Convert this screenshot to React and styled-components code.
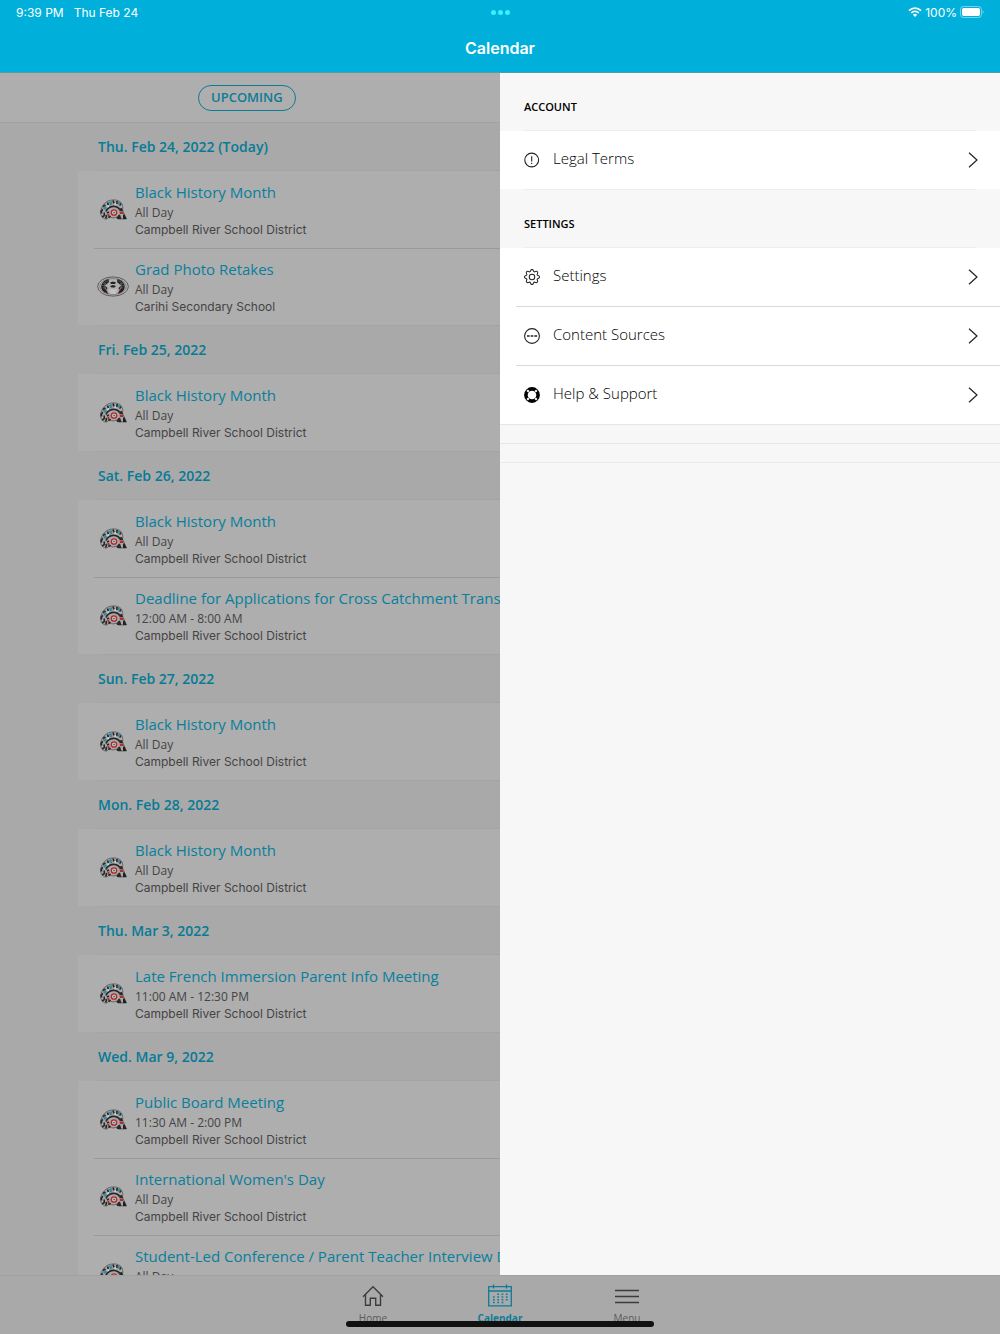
import React from 'react';
import styled, { createGlobalStyle } from 'styled-components';
import { BsGear } from 'react-icons/bs';

const DISTRICT = 'Campbell River School District';

const days = [
  {
    date: 'Thu. Feb 24, 2022 (Today)',
    events: [
      { title: 'Black History Month', time: 'All Day', source: DISTRICT },
      {
        title: 'Grad Photo Retakes',
        time: 'All Day',
        source: 'Carihi Secondary School',
        logo: 'carihi',
      },
    ],
  },
  {
    date: 'Fri. Feb 25, 2022',
    events: [
      { title: 'Black History Month', time: 'All Day', source: DISTRICT },
    ],
  },
  {
    date: 'Sat. Feb 26, 2022',
    events: [
      { title: 'Black History Month', time: 'All Day', source: DISTRICT },
      {
        title: 'Deadline for Applications for Cross Catchment Transfers',
        time: '12:00 AM - 8:00 AM',
        source: DISTRICT,
      },
    ],
  },
  {
    date: 'Sun. Feb 27, 2022',
    events: [
      { title: 'Black History Month', time: 'All Day', source: DISTRICT },
    ],
  },
  {
    date: 'Mon. Feb 28, 2022',
    events: [
      { title: 'Black History Month', time: 'All Day', source: DISTRICT },
    ],
  },
  {
    date: 'Thu. Mar 3, 2022',
    events: [
      {
        title: 'Late French Immersion Parent Info Meeting',
        time: '11:00 AM - 12:30 PM',
        source: DISTRICT,
      },
    ],
  },
  {
    date: 'Wed. Mar 9, 2022',
    events: [
      {
        title: 'Public Board Meeting',
        time: '11:30 AM - 2:00 PM',
        source: DISTRICT,
      },
      { title: "International Women's Day", time: 'All Day', source: DISTRICT },
      {
        title: 'Student-Led Conference / Parent Teacher Interview Day',
        time: 'All Day',
        source: DISTRICT,
      },
    ],
  },
];

const DistrictLogo = () => (
  <svg width="32" height="22" viewBox="0 0 32 22" aria-hidden="true">
    <path
      d="M3.500 13C4 9 6 5 10 2.500C15 0 21 0.500 24 3.500C26 6 26 9 25.500 11L29.500 20H21L19.500 18C16 20 13 18 12 18L10 20C6 20.500 3.500 17 3.500 13Z"
      fill="#a8a8a8"
      stroke="#4a4a4a"
      strokeWidth="0.7"
    />
    <g fill="none" stroke="#262626" strokeWidth="1.700">
      <path d="M4.500 14.500C4 12.500 4.500 11 6 10.500M5 17.500C7 18 8 16 7 13.500M8.500 19.500C9.500 18.500 9.500 17 9 16" />
      <path d="M6 7.500L8.500 6M10.500 3.500L11.500 6.500M16 1.500L17 4.500M20 2L20 5M24 4.500L22.500 6.500" />
      <path d="M9 12.500C10 9 14 7 18 7.500C20.500 8 22 9 22.500 10.500" />
      <path d="M11.500 18.500L13.500 17M10 14L12 13" />
    </g>
    <path d="M22 9.500L25 9L26 12H22.500Z" fill="#282828" />
    <path d="M21.500 16L23 15.500L24.500 20H20L19.500 18.500Z" fill="#292929" />
    <path d="M26 15.500H27.500L29.500 20H26Z" fill="#1f1f1f" />
    <path d="M11.500 3L14.500 2L15.500 5.500L13.500 6.500Z" fill="#3d8a9e" />
    <path d="M21 2.500L23.500 3L22.500 6L20.500 5.500Z" fill="#3d8a9e" />
    <path d="M5.500 9L8.500 7L10 9L8 11Z" fill="#3d8a9e" />
    <path d="M17.500 4L19 4L19 6L17.500 6Z" fill="#d0d0d0" />
    <path d="M10 6.500L12 6L12 8L10.500 8.500Z" fill="#d0d0d0" />
    <circle
      cx="17"
      cy="13.500"
      r="2.700"
      fill="#c2c2c2"
      stroke="#b42629"
      strokeWidth="1.300"
    />
    <circle cx="17" cy="13.500" r="0.700" fill="#333" />
    <path
      d="M22.500 12.500H26L26.500 15H23ZM10.500 15L12.500 14.500L12 17L10.500 17Z"
      fill="#b42b2e"
    />
  </svg>
);

const CarihiLogo = () => (
  <svg width="32" height="22" viewBox="0 0 32 22" aria-hidden="true">
    <ellipse
      cx="16"
      cy="10.500"
      rx="15.400"
      ry="9.600"
      fill="#b4b4b4"
      stroke="#505050"
      strokeWidth="0.9"
    />
    <ellipse
      cx="16"
      cy="10.500"
      rx="13.300"
      ry="8"
      fill="#b0b0b0"
      stroke="#5a5a5a"
      strokeWidth="0.6"
    />
    <path
      d="M11.500 3C4 5 2 12 7 16L11.500 18L9.500 14.500L10.500 12L8 9.500L12 6ZM20.500 3C28 5 30 12 25 16L20.500 18L22.500 14.500L21.500 12L24 9.500L20 6Z"
      fill="#222"
    />
    <path
      d="M13 6.500L16 5.500L19 6.500L18 8H14ZM13 10L16 9L19 10L17.500 11.500H14.500Z"
      fill="#252525"
    />
    <path d="M12 13.500H20L18.500 18H13.500Z" fill="#c2c2c2" />
    <path
      d="M6 7.500L8 6.500M6 11.500L8.500 12.500M10 15L9 13M26 7.500L24 6.500M26 11.500L23.500 12.500M22 15L23 13"
      stroke="#a03636"
      strokeWidth="1"
    />
    <path
      d="M8 5.500L11 5M24 5.500L21 5M5 9.500L7 9.500M27 9.500L25 9.500"
      stroke="#36593b"
      strokeWidth="1"
    />
    <path
      d="M8.500 7C7 9.500 8 12.500 10 14.500M23.500 7C25 9.500 24 12.500 22 14.500"
      fill="none"
      stroke="#b0b0b0"
      strokeWidth="0.6"
    />
  </svg>
);

const LegalIcon = () => (
  <svg width="16" height="16" viewBox="0 0 16 16" fill="none" stroke="#222">
    <circle cx="7.700" cy="8" r="6.900" strokeWidth="1.100" />
    <path d="M7.700 4.300V9.500M7.700 10.700V12" strokeWidth="1.100" />
  </svg>
);

const SourcesIcon = () => (
  <svg width="16" height="16" viewBox="0 0 16 16" fill="none" stroke="#222">
    <circle cx="8" cy="8" r="7.400" strokeWidth="1.100" />
    <path
      d="M3 8H5.700M6.700 8H9.400M10.400 8H13.100"
      strokeWidth="1.300"
    />
  </svg>
);

const SupportIcon = () => (
  <svg width="16" height="16" viewBox="0 0 16 16" fill="none">
    <circle cx="8" cy="8" r="6.100" stroke="#000" strokeWidth="3.600" />
    <path
      d="M3.200 3.200L4.800 4.800M12.800 3.200L11.200 4.800M3.200 12.800L4.800 11.200M12.800 12.800L11.200 11.200"
      stroke="#fff"
      strokeWidth="2"
    />
  </svg>
);

const Chevron = () => (
  <svg width="10" height="16" viewBox="0 0 10 16" fill="none">
    <path d="M1 0.700L9 8L1 15.300" stroke="#222" strokeWidth="1.200" />
  </svg>
);

const WifiIcon = () => (
  <svg width="14" height="10" viewBox="0 0 14 10" fill="none" stroke="#fff">
    <path d="M1 3.700C4.500 0.300 9.500 0.300 13 3.700" strokeWidth="1.800" />
    <path d="M3.200 6C5.400 3.900 8.600 3.900 10.800 6" strokeWidth="1.700" />
    <path
      d="M4.900 7.700C6 6.500 8 6.500 9.100 7.700L7 9.900Z"
      fill="#fff"
      stroke="none"
    />
  </svg>
);

const BatteryIcon = () => (
  <svg width="24" height="12" viewBox="0 0 24 12" fill="none">
    <rect
      x="0.500"
      y="0.500"
      width="21"
      height="11"
      rx="3"
      stroke="#fff"
      strokeOpacity="0.45"
    />
    <rect x="2" y="2" width="18" height="8" rx="1.800" fill="#fff" />
    <path d="M22.700 4.200C23.900 4.800 23.900 7.200 22.700 7.800Z" fill="#8bd9ec" />
  </svg>
);

const HomeIcon = () => (
  <svg width="24" height="24" viewBox="0 0 24 24" fill="none" stroke="#3c3c3c">
    <path
      d="M2 12.800L12 2.800L22 12.800M4.500 10.800V21.300H9.300V14.300H14.700V21.300H19.500V10.800"
      strokeWidth="1.400"
    />
  </svg>
);

const CalendarIcon = () => (
  <svg width="24" height="24" viewBox="0 0 24 24" fill="none" stroke="#0e7c98">
    <path
      d="M0.700 2.700H23.300V21.800H0.700ZM0.700 7H23.300M5.500 0.500V4.500M18.500 0.500V4.500"
      strokeWidth="1.300"
    />
    <path
      d="M9.300 10.200H20M5 13H20M5 15.800H20M5 18.600H16"
      strokeWidth="1.500"
      strokeDasharray="1.700 2.600"
    />
  </svg>
);

const MenuIcon = () => (
  <svg width="24" height="24" viewBox="0 0 24 24" stroke="#3c3c3c">
    <path d="M0 6.500H24M0 12.500H24M0 18.500H24" strokeWidth="1.400" />
  </svg>
);

const EventRow = ({ title, time, source, logo }) => (
  <Event>
    {logo === 'carihi' ? <CarihiLogo /> : <DistrictLogo />}
    <div>
      <EventTitle>{title}</EventTitle>
      <EventTime>{time}</EventTime>
      <EventSource>{source}</EventSource>
    </div>
  </Event>
);

const DrawerItem = ({ icon, label }) => (
  <DrawerRow>
    <DrawerLink href="#">
      {icon}
      <DrawerLabel>{label}</DrawerLabel>
      <Chevron />
    </DrawerLink>
  </DrawerRow>
);

const App = () => {
  return (
    <>
      <GlobalStyle />
      <Screen>
        <Header>
          <StatusBar>
            <StatusGroup>
              <span>9:39 PM</span>
              <span>Thu Feb 24</span>
            </StatusGroup>
            <Dots>
              <Dot />
              <Dot />
              <Dot />
            </Dots>
            <StatusRight>
              <WifiIcon />
              <span>100%</span>
              <BatteryIcon />
            </StatusRight>
          </StatusBar>
          <Title>Calendar</Title>
        </Header>

        <Body>
          <Agenda>
            <FilterBar>
              <FilterButton type="button">UPCOMING</FilterButton>
            </FilterBar>
            {days.map((day) => (
              <section key={day.date}>
                <DayHeading>{day.date}</DayHeading>
                <EventList>
                  {day.events.map((event) => (
                    <EventRow key={event.title} {...event} />
                  ))}
                </EventList>
              </section>
            ))}
          </Agenda>

          <Drawer>
            <DrawerHeading>ACCOUNT</DrawerHeading>
            <DrawerList>
              <DrawerItem icon={<LegalIcon />} label="Legal Terms" />
            </DrawerList>
            <DrawerHeading>SETTINGS</DrawerHeading>
            <DrawerList>
              <DrawerItem icon={<BsGear size={16} />} label="Settings" />
              <DrawerItem icon={<SourcesIcon />} label="Content Sources" />
              <DrawerItem icon={<SupportIcon />} label="Help & Support" />
            </DrawerList>
            <Strip />
            <Strip />
          </Drawer>
        </Body>

        <TabBar>
          <Tab href="#">
            <HomeIcon />
            Home
          </Tab>
          <Tab href="#" $active>
            <CalendarIcon />
            Calendar
          </Tab>
          <Tab href="#">
            <MenuIcon />
            Menu
          </Tab>
          <HomeIndicator />
        </TabBar>
      </Screen>
    </>
  );
};

const GlobalStyle = createGlobalStyle`
  * {
    box-sizing: border-box;
  }

  body {
    margin: 0;
    font-family: 'Open Sans', 'Noto Sans', sans-serif;
  }

  svg {
    flex-shrink: 0;
    display: block;
  }
`;

const Screen = styled.div`
  display: flex;
  flex-direction: column;
  height: 100vh;
  background: #a9a9a9;
`;

const Header = styled.header`
  flex-shrink: 0;
  color: #fff;
  background: #00b0da;
  border-bottom: 1px solid #4e9eb0;
  font-family: Inter, sans-serif;
`;

const StatusBar = styled.div`
  display: grid;
  grid-template-columns: 1fr auto 1fr;
  align-items: center;
  height: 24px;
  padding: 0 16px;
  font-size: 12px;
  font-weight: 400;
`;

const StatusGroup = styled.div`
  display: flex;
  align-items: center;
  gap: 10px;
`;

const StatusRight = styled.div`
  display: flex;
  align-items: center;
  justify-content: flex-end;
  gap: 3px;
`;

const Dots = styled.div`
  display: flex;
  gap: 2px;
`;

const Dot = styled.span`
  width: 5px;
  height: 5px;
  border-radius: 50%;
  background: #3defff;
`;

const Title = styled.h1`
  margin: 0;
  font-size: 16px;
  font-weight: 600;
  line-height: 48px;
  text-align: center;
`;

const Body = styled.div`
  flex: 1;
  display: flex;
  min-height: 0;
`;

const Agenda = styled.main`
  flex: 1;
  min-width: 0;
  overflow: hidden;
  white-space: nowrap;
`;

const FilterBar = styled.div`
  display: flex;
  align-items: center;
  height: 50px;
  padding-left: 198px;
  background: #aeaeae;
  border-bottom: 1px solid #a1a1a1;
`;

const FilterButton = styled.button`
  height: 26px;
  padding: 0 12px 2px;
  color: #0b7c97;
  background: none;
  border: 1px solid #0b7c97;
  border-radius: 13px;
  font-family: inherit;
  font-size: 13px;
  font-weight: 600;
`;

const DayHeading = styled.h2`
  height: 48px;
  margin: 0 0 0 98px;
  color: #057b96;
  border-bottom: 1px solid #a4a4a4;
  font-size: 14px;
  font-weight: 600;
  line-height: 48px;

  section + section & {
    height: 49px;
    border-top: 1px solid #a4a4a4;
  }
`;

const EventList = styled.ul`
  margin: 0 0 0 78px;
  padding: 0 0 0 16px;
  list-style: none;
  background: #aeaeae;
`;

const Event = styled.li`
  display: flex;
  align-items: center;
  gap: 6px;
  height: 77px;
  padding-left: 3px;

  & + & {
    border-top: 1px solid #9a9a9a;
  }
`;

const EventTitle = styled.h3`
  margin: 0 0 2px;
  color: #087f9c;
  font-size: 15px;
  font-weight: 400;
  line-height: 22px;
`;

const EventTime = styled.p`
  margin: 0;
  color: #444;
  font-size: 12px;
  line-height: 16px;
`;

const EventSource = styled.p`
  margin: 0;
  color: #444;
  font-family: Inter, sans-serif;
  font-size: 12px;
  line-height: 18px;
`;

const Drawer = styled.aside`
  flex: 1;
  min-width: 0;
  background: #f7f7f7;
`;

const DrawerHeading = styled.h2`
  height: 58px;
  margin: 0 24px;
  padding-top: 10px;
  color: #000;
  border-bottom: 1px solid #eee;
  font-size: 11px;
  font-weight: 600;
  line-height: 48px;

  ul + & {
    height: 59px;
    border-top: 1px solid #eee;
  }
`;

const DrawerList = styled.ul`
  margin: 0;
  padding: 0 0 0 16px;
  list-style: none;
  background: #fff;
`;

const DrawerRow = styled.li`
  & + & {
    border-top: 1px solid #d9d9d9;
  }
`;

const DrawerLink = styled.a`
  display: flex;
  align-items: center;
  gap: 13px;
  height: 58px;
  padding: 0 22px 0 8px;
  color: #222;
  text-decoration: none;
`;

const DrawerLabel = styled.span`
  flex: 1;
  padding-bottom: 4px;
  color: #000;
  font-size: 15px;
  font-weight: 300;
  line-height: 20px;
`;

const Strip = styled.div`
  height: 19px;
  border-top: 1px solid #e6e6e6;

  & + & {
    height: 20px;
    border-bottom: 1px solid #ebebeb;
  }
`;

const TabBar = styled.nav`
  position: relative;
  flex-shrink: 0;
  display: flex;
  justify-content: center;
  height: 59px;
  background: #a9a9a9;
  border-top: 1px solid #a1a1a1;
`;

const Tab = styled.a`
  display: flex;
  flex-direction: column;
  align-items: center;
  width: 127px;
  padding-top: 8px;
  color: ${(props) => (props.$active ? '#0e7c98' : '#5c5c5c')};
  font-size: 10px;
  font-weight: ${(props) => (props.$active ? 700 : 400)};
  line-height: 20px;
  text-decoration: none;
`;

const HomeIndicator = styled.div`
  position: absolute;
  bottom: 7px;
  left: 50%;
  width: 308px;
  height: 6px;
  border-radius: 3px;
  background: #111;
  transform: translateX(-50%);
`;

export default App;
